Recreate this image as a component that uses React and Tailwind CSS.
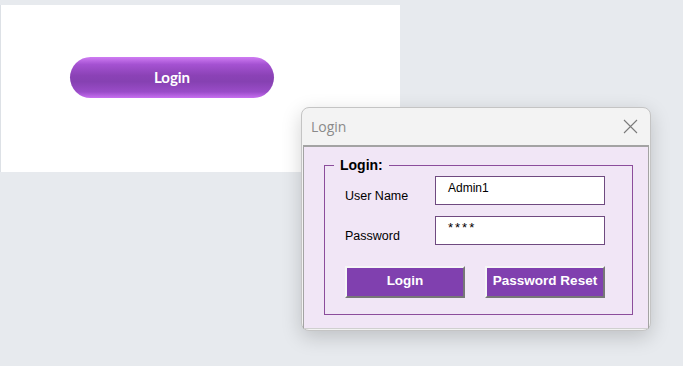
export default function App() {
  return (
    <div className="relative h-[366px] w-[683px] overflow-hidden bg-[#e7eaee] pt-[5px] font-['Liberation_Sans',sans-serif]">
      <div className="h-[167px] w-[400px] border-l border-[#dde1e6] bg-white pt-[52px] pl-[69px]">
        <button
          type="button"
          className="flex h-[41px] w-[204px] items-center justify-center rounded-full bg-[linear-gradient(180deg,#cf7cf3_0%,#a552d2_18%,#8b42b6_45%,#8641b2_60%,#9a4cc8_85%,#c86ff0_100%)] font-['Lato',sans-serif] text-[15px] font-bold text-white"
        >
          Login
        </button>
      </div>

      <div className="absolute left-[301px] top-[107px] flex h-[224px] w-[350px] flex-col rounded-[8px] border border-[#c4c4c4] bg-[#f3f3f3] shadow-[0_6px_20px_rgba(0,0,0,0.18)]">
        <div className="flex h-[37px] shrink-0 items-center justify-between pl-[9px] pr-[12px]">
          <span className="font-['Open_Sans',sans-serif] text-[14px] text-[#8a8a8a]">Login</span>
          <svg width="15" height="15" viewBox="0 0 15 15" className="text-[#7a7a7a]">
            <path d="M1 1 L14 14 M14 1 L1 14" stroke="currentColor" strokeWidth="1.1" fill="none" />
          </svg>
        </div>
        <div className="mx-[1px] mb-[1px] flex-1 border-x border-b border-t-2 border-[#a3a3a3] border-b-[#d0d0d0] bg-[#f1e6f6] pl-[20px] pr-[15px] pt-[10px]">
          <fieldset className="h-[158px] border border-[#8c4d9c]">
            <legend className="ml-[9px] px-[6px] text-[14px] font-bold leading-[16px] text-black">Login:</legend>
            <div className="pl-[20px]">
              <div className="mt-[3px] flex items-start">
                <span className="w-[90px] pt-[11px] text-[12.5px] text-black">User Name</span>
                <div className="h-[29px] w-[170px] border border-[#6f4a80] bg-white pl-[12px] pt-[2px] text-[12px] text-black">
                  Admin1
                </div>
              </div>
              <div className="mt-[10px] flex items-start">
                <span className="w-[90px] pt-[11px] text-[12.5px] text-black">Password</span>
                <div className="h-[29px] w-[170px] border border-[#6f4a80] bg-white pl-[12px] pt-[1px] text-[13px] tracking-[2px] text-black">
                  ****
                </div>
              </div>
              <div className="mt-[20px] flex gap-[20px]">
                <button
                  type="button"
                  className="h-[32px] w-[120px] border-2 border-l-[#f6f6f6] border-t-[#f6f6f6] border-r-[#777777] border-b-[#777777] bg-[#8040af] text-[13.5px] font-bold text-white"
                >
                  Login
                </button>
                <button
                  type="button"
                  className="h-[32px] w-[120px] border-2 border-l-[#f6f6f6] border-t-[#f6f6f6] border-r-[#777777] border-b-[#777777] bg-[#8040af] text-[13.5px] font-bold text-white"
                >
                  Password Reset
                </button>
              </div>
            </div>
          </fieldset>
        </div>
      </div>
    </div>
  );
}
